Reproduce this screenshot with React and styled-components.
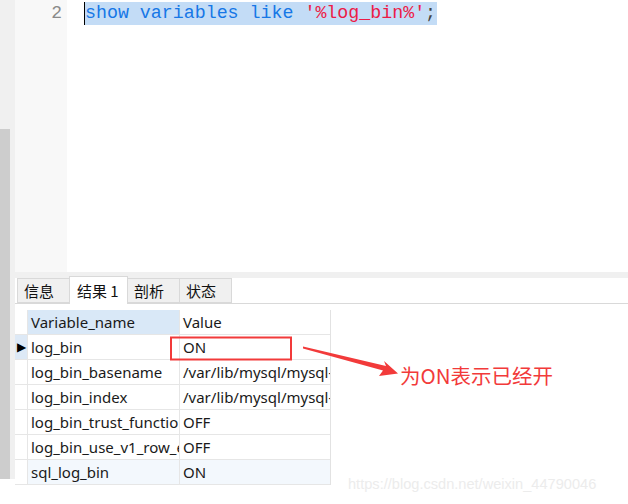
import React from 'react'
import styled, { createGlobalStyle } from 'styled-components'

const GlobalStyle = createGlobalStyle`
  html, body {
    margin: 0;
    padding: 0;
    background: #ffffff;
  }
  * {
    box-sizing: border-box;
  }
`

const rows = [
  { name: 'log_bin', value: 'ON', current: true },
  { name: 'log_bin_basename', value: '/var/lib/mysql/mysql-bin' },
  { name: 'log_bin_index', value: '/var/lib/mysql/mysql-bin.index' },
  { name: 'log_bin_trust_function_creators', value: 'OFF' },
  { name: 'log_bin_use_v1_row_events', value: 'OFF' },
  { name: 'sql_log_bin', value: 'ON', tinted: true }
]

const tabs = ['信息', '结果 1', '剖析', '状态']

const App = () => {
  return (
    <Page>
      <GlobalStyle />
      <LeftStrip>
        <ScrollThumb />
      </LeftStrip>
      <Main>
        <Editor>
          <Gutter>
            <LineNo>2</LineNo>
          </Gutter>
          <Code>
            <Selection>
              <Kw>show variables like </Kw>
              <Str>'%log_bin%'</Str>
              <Punct>;</Punct>
            </Selection>
          </Code>
        </Editor>
        <Band />
        <TabBar>
          {tabs.map((t, i) => (
            <Tab key={t} $active={i === 1}>
              {t}
            </Tab>
          ))}
        </TabBar>
        <GridArea>
          <Grid>
            <Row>
              <Indicator />
              <HeadCell $first>Variable_name</HeadCell>
              <HeadCell>Value</HeadCell>
            </Row>
            {rows.map((r) => (
              <Row key={r.name} $tinted={r.tinted}>
                <Indicator $current={r.current}>{r.current ? '▶' : ''}</Indicator>
                <Cell $first>{r.name}</Cell>
                <Cell>{r.value}</Cell>
              </Row>
            ))}
          </Grid>
        </GridArea>
      </Main>

      <Overlay viewBox="0 0 628 504">
        <rect x="171" y="337.5" width="120" height="22" fill="none" stroke="#f23a3a" strokeWidth="2" />
        <polygon
          points="303,346.5 386,366 384,361 398,373.5 379,376 383,370.5 303,348.5"
          fill="#f23a3a"
        />
      </Overlay>
      <Note>为ON表示已经开</Note>
      <Watermark>https://blog.csdn.net/weixin_44790046</Watermark>
    </Page>
  )
}

const Page = styled.div`
  position: relative;
  width: 628px;
  height: 504px;
  display: flex;
  overflow: hidden;
  background: #ffffff;
`

const LeftStrip = styled.div`
  width: 15px;
  flex-shrink: 0;
  height: 479px;
  background: #f0f0f0;
  padding-top: 129px;
`

const ScrollThumb = styled.div`
  width: 10px;
  height: 350px;
  background: #cdcdcd;
`

const Main = styled.div`
  flex: 1;
  display: flex;
  flex-direction: column;
`

const Editor = styled.div`
  height: 272px;
  display: flex;
`

const Gutter = styled.div`
  width: 52px;
  background: #f8f8f8;
  padding-top: 2px;
  padding-right: 5px;
  text-align: right;
`

const LineNo = styled.div`
  font-family: 'Liberation Mono', monospace;
  font-size: 18px;
  line-height: 23px;
  color: #8a8a8a;
`

const Code = styled.div`
  flex: 1;
  padding: 2px 0 0 17px;
  background: #ffffff;
`

const Selection = styled.div`
  display: inline-block;
  height: 23px;
  line-height: 23px;
  background: #c3dcf6;
  border-left: 1.5px solid #000000;
  font-family: 'Liberation Mono', monospace;
  font-size: 18.3px;
  white-space: pre;
  padding-right: 1px;
`

const Kw = styled.span`
  color: #1677e6;
`

const Str = styled.span`
  color: #ec1b47;
`

const Punct = styled.span`
  color: #444444;
`

const Band = styled.div`
  height: 6px;
  background: #f0f0f0;
`

const TabBar = styled.div`
  height: 26px;
  display: flex;
  align-items: flex-end;
  padding-left: 2px;
  border-bottom: 1px solid #d9d9d9;
  background: #ffffff;
`

const Tab = styled.div`
  height: ${(p) => (p.$active ? '28px' : '25px')};
  margin-bottom: ${(p) => (p.$active ? '-1px' : '0')};
  padding: 0 ${(p) => (p.$active ? '7px' : '6px')};
  display: flex;
  align-items: center;
  background: ${(p) => (p.$active ? '#ffffff' : '#f0f0f0')};
  border: 1px solid #d9d9d9;
  border-bottom: ${(p) => (p.$active ? 'none' : '1px solid #d9d9d9')};
  margin-right: -1px;
  font-family: 'Noto Sans CJK SC', sans-serif;
  font-size: 15px;
  color: #111111;
  min-width: ${(p) => (p.$active ? '59px' : '53px')};
  justify-content: flex-start;
`

const GridArea = styled.div`
  padding-top: 6px;
`

const Grid = styled.div`
  width: 316px;
  border-right: 1px solid #e2e2e2;
`

const Row = styled.div`
  display: flex;
  height: 25px;
  border-bottom: 1px solid #e6e6e6;
  background: ${(p) => (p.$tinted ? '#f3f8fd' : 'transparent')};
`

const Indicator = styled.div`
  width: 13px;
  flex-shrink: 0;
  background: ${(p) => (p.$current ? '#dde9f6' : '#ffffff')};
  border-right: 1px solid #e6e6e6;
  font-size: 12px;
  line-height: 24px;
  color: #000000;
  padding-left: 2px;
  font-family: 'DejaVu Sans', sans-serif;
`

const Cell = styled.div`
  width: ${(p) => (p.$first ? '152px' : '150px')};
  flex-shrink: 0;
  padding-left: 3px;
  border-right: ${(p) => (p.$first ? '1px solid #e6e6e6' : 'none')};
  font-family: 'Noto Sans', 'Open Sans', sans-serif;
  font-size: 15px;
  line-height: 24px;
  color: #1a1a1a;
  white-space: nowrap;
  overflow: hidden;
`

const HeadCell = styled(Cell)`
  background: ${(p) => (p.$first ? '#d9e8f7' : '#ffffff')};
`

const Overlay = styled.svg`
  position: absolute;
  left: 0;
  top: 0;
  width: 628px;
  height: 504px;
  pointer-events: none;
`

const Note = styled.div`
  position: absolute;
  left: 400px;
  top: 362px;
  font-family: 'Noto Sans CJK SC', sans-serif;
  font-size: 20.5px;
  line-height: 26px;
  color: #f23a3a;
  white-space: nowrap;
`

const Watermark = styled.div`
  position: absolute;
  left: 348px;
  top: 476px;
  font-family: 'Liberation Sans', sans-serif;
  font-size: 14.6px;
  color: #ececec;
  white-space: nowrap;
`

export default App
